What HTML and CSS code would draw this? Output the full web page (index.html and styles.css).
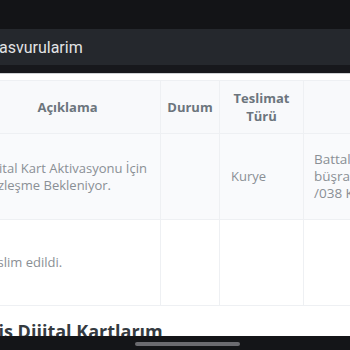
FILE: index.html
```html
<!DOCTYPE html>
<html lang="tr">
<head>
	<meta charset="UTF-8"/>
	<meta name="viewport" content="width=device-width, initial-scale=1"/>
	<title>Kart Başvurularım</title>
	<link rel="stylesheet" href="styles.css">
</head>
<body>

<div class="status-bar"></div>

<header class="app-bar">
	<h1 class="app-title">Basvurularim</h1>
</header>
<div class="app-bar-edge"></div>

<main class="content">
	<div class="table-wrap">
		<table class="apply-table" aria-label="Kart başvuruları">
			<colgroup>
				<col class="col-desc">
				<col class="col-status">
				<col class="col-delivery">
				<col class="col-address">
			</colgroup>
			<thead>
			<tr>
				<th>Açıklama</th>
				<th>Durum</th>
				<th>Teslimat Türü</th>
				<th>Adres</th>
			</tr>
			</thead>
			<tbody>
			<tr class="striped">
				<td>Dijital Kart Aktivasyonu İçin Sözleşme Bekleniyor.</td>
				<td></td>
				<td>Kurye</td>
				<td class="address">Battalgazi Mah.<br>büşra Sok. No:4<br>/038 Kayseri</td>
			</tr>
			<tr>
				<td>Teslim edildi.</td>
				<td></td>
				<td></td>
				<td></td>
			</tr>
			</tbody>
		</table>
	</div>

	<h2 class="section-title">Teslim Edilmiş Dijital Kartlarım</h2>
</main>

<!-- system navigation bar -->
<div class="home-bar">
	<div class="home-indicator"></div>
</div>

</body>
</html>
```

FILE: styles.css
```css
body {
    margin: 0;
    width: 350px;
    height: 350px;
    overflow: hidden;
    background-color: #ffffff;
    font-family: "Open Sans", sans-serif;
}

.status-bar {
    height: 29px;
    background-color: #131417;
}

.app-bar {
    height: 36px;
    display: flex;
    align-items: center;
    background-color: #25282d;
}

.app-title {
    margin: 0 0 0 -11px;
    font-family: Roboto, sans-serif;
    font-size: 16px;
    font-weight: 400;
    color: #e2e3e5;
    white-space: nowrap;
}

.app-bar-edge {
    height: 8px;
    background-color: #17181c;
    border-bottom: 1px solid #cfd1d4;
}

.content {
    padding-top: 6px;
}

.table-wrap {
    margin-left: -32px;
}

.apply-table {
    width: 536px;
    table-layout: fixed;
    border-collapse: collapse;
}

.col-desc { width: 192px; }
.col-status { width: 59px; }
.col-delivery { width: 84px; }
.col-address { width: 201px; }

th, td {
    font-size: 13px;
    border: 1px solid #eef0f3;
}

th {
    height: 52px;
    padding: 0 4px;
    background-color: #f8f9fb;
    color: #6c757d;
    font-weight: 700;
    line-height: 18px;
    text-align: center;
}

th:first-child {
    padding-left: 10px;
}

td {
    height: 85px;
    padding: 0 8px 0 11px;
    color: #8a8f95;
    line-height: 17px;
    text-align: left;
    vertical-align: middle;
}

td:first-child {
    padding-left: 14px;
}

.striped td {
    background-color: #f9fafc;
}

td.address {
    padding-left: 10px;
    font-size: 13.5px;
    white-space: nowrap;
}

.section-title {
    margin: 13px 0 0 -115px;
    font-size: 18px;
    font-weight: 700;
    color: #343a40;
    white-space: nowrap;
}

.home-bar {
    position: fixed;
    left: 0;
    right: 0;
    bottom: 0;
    height: 14px;
    background-color: #141518;
}

.home-indicator {
    width: 105px;
    height: 4px;
    margin: 6px 0 0 135px;
    border-radius: 2px;
    background-color: #6b6b70;
}
```
